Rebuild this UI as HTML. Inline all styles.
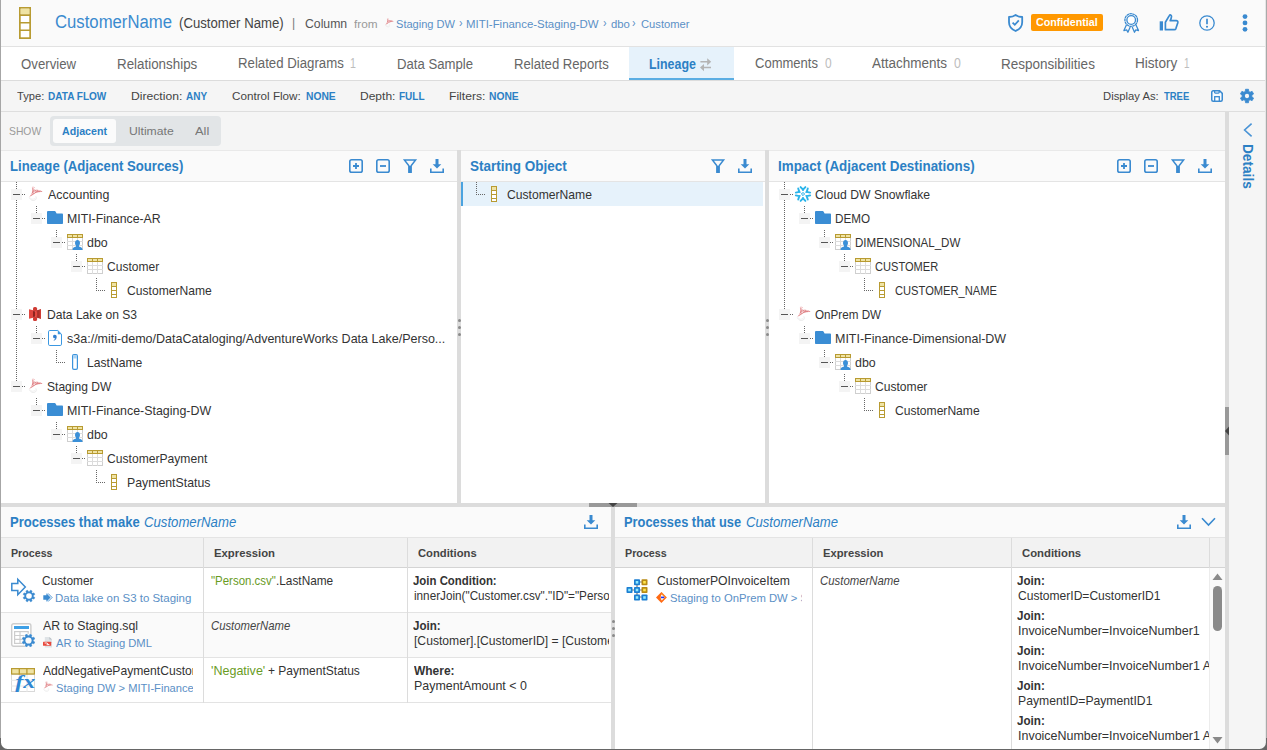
<!DOCTYPE html>
<html lang="en"><head><meta charset="utf-8"><title>CustomerName - Lineage</title>
<style>
html,body{margin:0;padding:0;background:#fff}
body{width:1267px;height:750px;overflow:hidden;position:relative;font-family:"Liberation Sans",sans-serif}
#app{position:absolute;left:0;top:0;width:1267px;height:750px;overflow:hidden;background:#fff}
.b{position:absolute;box-sizing:border-box}
.t{position:absolute;white-space:pre;line-height:1;transform-origin:0 0;display:block}
.clip{position:absolute;overflow:hidden}
svg{position:absolute;overflow:visible}
.vd{width:1px;background-image:linear-gradient(#666 50%,rgba(0,0,0,0) 50%);background-size:1px 2px}
.hd{height:1px;background-image:linear-gradient(90deg,#666 50%,rgba(0,0,0,0) 50%);background-size:2px 1px}
.exp{width:11px;height:11px;background:#f4f4f4}
.exp i{position:absolute;left:2px;top:5px;width:7px;height:1px;background:#555}
.grip{position:absolute;width:3px;height:3px;border-radius:50%;background:#8a8a8a}
</style></head><body><div id="app">

<header>
<div class="b" style="left:0px;top:0px;width:1267px;height:46px;background:#fafafa;"></div>
<div class="b" style="left:0px;top:46px;width:1267px;height:1px;background:#e2e2e2;"></div>
<svg style="left:19px;top:7px" width="12" height="32" viewBox="0 0 12 32"><rect x="0.85" y="0.85" width="10.3" height="30.3" fill="#fff" stroke="#b89b32" stroke-width="1.7"/><rect x="1.7" y="1.7" width="8.6" height="5.6" fill="#efe3a4"/><path d="M0 8.1H12M0 15.7H12M0 23.3H12" stroke="#b89b32" stroke-width="1.6"/></svg>
<span class="t" style='left:55.31px;top:14px;font-size:17.6px;color:#3a8bcf;transform:scaleX(0.9496)'>CustomerName</span>
<span class="t" style='left:179.21px;top:16px;font-size:14.0px;color:#444;transform:scaleX(0.9408)'>(Customer Name)</span>
<span class="t" style='left:292.25px;top:17px;font-size:12.7px;color:#777;transform:scaleX(0.9557)'>|</span>
<span class="t" style='left:304.71px;top:18px;font-size:12.7px;color:#555;transform:scaleX(0.9644)'>Column</span>
<span class="t" style='left:353.92px;top:18px;font-size:11.7px;color:#999;transform:scaleX(1.0099)'>from</span>
<svg style="left:384px;top:18.3px" width="9.92" height="9.92" viewBox="0 0 16 16"><g fill="none" stroke-linecap="round"><path d="M2.2 10.800C4.400 8.800 6 5.600 5.200 1.400C6.400 2.100 7.300 3 8 4.100C10.400 3.100 13.600 3.900 15.600 6C13 5.700 10.600 6.100 8.600 7.100C6.600 8.300 4.800 10 2.200 10.800z" fill="#d4545a" fill-opacity="0.720"/><path d="M5.300 1.300C6.200 .9 7.200 1.100 7.800 1.800" stroke="#e9a3a6" stroke-width="0.700"/><path d="M6.600 3.200c.9 1.100 1 2.300 .3 3.500M9.800 4.600c-1.100 .3 -2 1 -2.500 2.100M11.200 4.500c.8 -.3 1.700 -.100 2.300 .500M4.400 8.400c.8 -.300 1.500 -.800 2 -1.500" stroke="#fff" stroke-width="0.650" stroke-opacity="0.900"/><path d="M2.400 11.800C3.600 14.200 6.200 15.200 8.400 13.800C9.300 13.100 9.500 11.900 9 10.800" stroke="#e9e9e9" stroke-width="1"/><path d="M3.800 12.400C5 13.500 6.500 13.500 7.600 12.600" stroke="#efefef" stroke-width="0.800"/></g></svg>
<span class="t" style='left:396.12px;top:18px;font-size:11.7px;color:#5b90c6;transform:scaleX(0.9463)'>Staging DW</span>
<span class="t" style='left:458.78px;top:17px;font-size:12.5px;color:#5b90c6;transform:scaleX(0.8518)'>›</span>
<span class="t" style='left:466.40px;top:18px;font-size:11.7px;color:#5b90c6;transform:scaleX(0.9772)'>MITI-Finance-Staging-DW</span>
<span class="t" style='left:602.78px;top:17px;font-size:12.5px;color:#5b90c6;transform:scaleX(0.8518)'>›</span>
<span class="t" style='left:610.61px;top:18px;font-size:11.7px;color:#5b90c6;transform:scaleX(0.9672)'>dbo</span>
<span class="t" style='left:632.38px;top:17px;font-size:12.5px;color:#5b90c6;transform:scaleX(0.8518)'>›</span>
<span class="t" style='left:640.55px;top:18px;font-size:11.7px;color:#5b90c6;transform:scaleX(0.9579)'>Customer</span>
<svg style="left:1008px;top:14px" width="16" height="18" viewBox="0 0 16 18"><path d="M7.6 0.9C5.8 2.2 3.6 2.9 1 3v5.2c0 4 2.4 7 6.6 8.8c4.200 -1.8 6.600 -4.800 6.600 -8.800V3C11.600 2.900 9.400 2.200 7.600 0.900z" fill="none" stroke="#3a8ad0" stroke-width="1.800" stroke-linejoin="round"/><path d="M4.6 8.600l2.200 2.200l4 -4.400" fill="none" stroke="#3a8ad0" stroke-width="1.800"/></svg>
<div class="b" style="left:1031px;top:14px;width:72px;height:17px;background:#ff9800;border-radius:2px"></div>
<span class="t" style='left:1036.31px;top:17px;font-size:11.5px;color:#fff;transform:scaleX(0.9295);font-weight:700'>Confidential</span>
<svg style="left:1122px;top:13px" width="19" height="22" viewBox="0 0 19 22"><g fill="none" stroke="#3a8ad0" stroke-width="1.250" stroke-linejoin="round"><path d="M4.500 11.700L1.900 17.600l2.700 -.700l1.300 2.400l2.300 -5.300M13.900 11.700l2.600 5.900l-2.700 -.700l-1.300 2.400l-2.300 -5.300"/><circle cx="9.200" cy="7" r="6.300" stroke-width="1.300" stroke-dasharray="2.600 0.400"/><circle cx="9.200" cy="7" r="4.300" fill="#fff" stroke-width="1.300"/></g></svg>
<svg style="left:1159px;top:14px" width="20" height="17" viewBox="0 0 20 17"><rect x="0.700" y="7.300" width="3.300" height="9.200" fill="#3a8ad0"/><path d="M6.400 15.700V8.300L10.300 1.600c.700 -1.300 2.300 -.700 2.200 .900c-.100 1.400 -.600 2.800 -1.300 4.200h6.100c1.200 0 1.800 .900 1.500 2l-1.900 5.900c-.300 .800 -.800 1.100 -1.600 1.100z" fill="none" stroke="#3a8ad0" stroke-width="1.700" stroke-linejoin="round"/></svg>
<svg style="left:1199px;top:15px" width="16" height="16" viewBox="0 0 16 16"><circle cx="8" cy="8" r="7.200" fill="none" stroke="#3a8ad0" stroke-width="1.300"/><path d="M8 3.800V9.200" stroke="#3a8ad0" stroke-width="1.700"/><circle cx="8" cy="11.800" r="1.050" fill="#3a8ad0"/></svg>
<svg style="left:1242px;top:14px" width="6" height="18" viewBox="0 0 6 18"><circle cx="3" cy="2.6" r="2.400" fill="#3a8ad0"/><circle cx="3" cy="8.9" r="2.400" fill="#3a8ad0"/><circle cx="3" cy="15.3" r="2.400" fill="#3a8ad0"/></svg>
</header>
<nav>
<div class="b" style="left:0px;top:47px;width:1267px;height:33px;background:#fff;"></div>
<div class="b" style="left:629px;top:47px;width:105px;height:33px;background:#e6f2fb;"></div>
<div class="b" style="left:629px;top:78px;width:105px;height:2px;background:#5baee3;"></div>
<div class="b" style="left:0px;top:80px;width:1267px;height:1px;background:#dcdcdc;"></div>
<span class="t" style='left:21.29px;top:57px;font-size:14.7px;color:#666;transform:scaleX(0.8994)'>Overview</span>
<span class="t" style='left:117.08px;top:57px;font-size:14.7px;color:#666;transform:scaleX(0.9102)'>Relationships</span>
<span class="t" style='left:237.79px;top:56px;font-size:14.7px;color:#666;transform:scaleX(0.8999)'>Related Diagrams</span>
<span class="t" style='left:349.97px;top:56px;font-size:14.7px;color:#bdbdbd;transform:scaleX(0.7288)'>1</span>
<span class="t" style='left:396.99px;top:57px;font-size:14.7px;color:#666;transform:scaleX(0.8957)'>Data Sample</span>
<span class="t" style='left:513.79px;top:57px;font-size:14.7px;color:#666;transform:scaleX(0.8927)'>Related Reports</span>
<span class="t" style='left:649.16px;top:57px;font-size:14.7px;color:#2c80c4;transform:scaleX(0.8452);font-weight:700'>Lineage</span>
<svg style="left:700px;top:57.5px" width="11.5" height="13.5" viewBox="0 0 11.5 13.5"><path d="M0.400 3.800H8M3.400 9.600H11" stroke="#b4b4b4" stroke-width="1.500" fill="none"/><path d="M7.200 0.200L11.200 3.800L7.200 7.400zM4 6L0 9.600L4 13.200z" fill="#b4b4b4"/></svg>
<span class="t" style='left:755.47px;top:56px;font-size:14.7px;color:#666;transform:scaleX(0.8862)'>Comments</span>
<span class="t" style='left:824.57px;top:56px;font-size:14.7px;color:#bdbdbd;transform:scaleX(0.8141)'>0</span>
<span class="t" style='left:872.33px;top:56px;font-size:14.7px;color:#666;transform:scaleX(0.9189)'>Attachments</span>
<span class="t" style='left:953.81px;top:56px;font-size:14.7px;color:#bdbdbd;transform:scaleX(0.8366)'>0</span>
<span class="t" style='left:1000.66px;top:57px;font-size:14.7px;color:#666;transform:scaleX(0.9200)'>Responsibilities</span>
<span class="t" style='left:1135.06px;top:56px;font-size:14.7px;color:#666;transform:scaleX(0.9251)'>History</span>
<span class="t" style='left:1184.30px;top:56px;font-size:14.7px;color:#bdbdbd;transform:scaleX(0.6731)'>1</span>
</nav>
<section id="toolbar">
<div class="b" style="left:0px;top:81px;width:1267px;height:30px;background:#f5f5f5;"></div>
<div class="b" style="left:0px;top:111px;width:1267px;height:1px;background:#dedede;"></div>
<span class="t" style='left:17.21px;top:91px;font-size:11.5px;color:#444;transform:scaleX(0.9681)'>Type:</span>
<span class="t" style='left:48.29px;top:91px;font-size:11.5px;color:#2c80c4;transform:scaleX(0.8722);font-weight:700'>DATA FLOW</span>
<span class="t" style='left:130.70px;top:91px;font-size:11.5px;color:#444;transform:scaleX(1.0553)'>Direction:</span>
<span class="t" style='left:186.27px;top:91px;font-size:11.5px;color:#2c80c4;transform:scaleX(0.8680);font-weight:700'>ANY</span>
<span class="t" style='left:232.45px;top:91px;font-size:11.5px;color:#444;transform:scaleX(1.0155)'>Control Flow:</span>
<span class="t" style='left:305.67px;top:91px;font-size:11.5px;color:#2c80c4;transform:scaleX(0.8933);font-weight:700'>NONE</span>
<span class="t" style='left:360.09px;top:91px;font-size:11.5px;color:#444;transform:scaleX(1.0456)'>Depth:</span>
<span class="t" style='left:399.09px;top:91px;font-size:11.5px;color:#2c80c4;transform:scaleX(0.8688);font-weight:700'>FULL</span>
<span class="t" style='left:448.79px;top:91px;font-size:11.5px;color:#444;transform:scaleX(1.0565)'>Filters:</span>
<span class="t" style='left:489.07px;top:91px;font-size:11.5px;color:#2c80c4;transform:scaleX(0.8933);font-weight:700'>NONE</span>
<span class="t" style='left:1103.00px;top:91px;font-size:11.5px;color:#444;transform:scaleX(0.9802)'>Display As:</span>
<span class="t" style='left:1164.06px;top:91px;font-size:11.5px;color:#2c80c4;transform:scaleX(0.8224);font-weight:700'>TREE</span>
<svg style="left:1211px;top:90px" width="12" height="12" viewBox="0 0 12 12"><path d="M2.200 0.750H8.600L11.250 3.400V9.800a1.450 1.450 0 0 1 -1.450 1.450H2.200A1.450 1.450 0 0 1 .75 9.800V2.200A1.450 1.450 0 0 1 2.200 .75z" fill="#f7fbfe" stroke="#3a8ad0" stroke-width="1.500"/><path d="M3.600 1V2.300a.8 .8 0 0 0 .8 .8H7.400a.8 .8 0 0 0 .8 -.8V1" fill="none" stroke="#3a8ad0" stroke-width="1.300"/><rect x="3.700" y="6.700" width="4.600" height="4.500" fill="#fff" stroke="#3a8ad0" stroke-width="1.300"/></svg>
<svg style="left:1240px;top:89px" width="14" height="14" viewBox="0 0 14 14"><path d="M5.51 0.26L8.49 0.26L8.76 2.43L10.08 3.19L12.09 2.34L13.58 4.92L11.84 6.24L11.84 7.76L13.58 9.08L12.09 11.66L10.08 10.81L8.76 11.57L8.49 13.74L5.51 13.74L5.24 11.57L3.92 10.81L1.91 11.66L0.42 9.08L2.16 7.76L2.16 6.24L0.42 4.92L1.91 2.34L3.92 3.19L5.24 2.43z" fill="#3a8ad0" stroke="#3a8ad0" stroke-width="0.800" stroke-linejoin="round"/><circle cx="7" cy="7" r="2.150" fill="#f5f5f5"/></svg>
</section>
<main>
<div class="b" style="left:0px;top:112px;width:1267px;height:638px;background:#f5f5f5;"></div>
<span class="t" style='left:9.05px;top:126px;font-size:11.5px;color:#9a9a9a;transform:scaleX(0.8992)'>SHOW</span>
<div class="b" style="left:50px;top:116px;width:171px;height:30px;background:#e2e5e7;border-radius:4px"></div>
<div class="b" style="left:53px;top:119px;width:63px;height:24px;background:#fbfbfb;border-radius:3px"></div>
<span class="t" style='left:62.15px;top:126px;font-size:11.5px;color:#2c80c4;transform:scaleX(0.9250);font-weight:700'>Adjacent</span>
<span class="t" style='left:128.56px;top:126px;font-size:11.5px;color:#777;transform:scaleX(1.0591)'>Ultimate</span>
<span class="t" style='left:195.32px;top:126px;font-size:11.5px;color:#777;transform:scaleX(1.1194)'>All</span>
<div class="b" style="left:1225px;top:112px;width:4px;height:638px;background:#dcdcdc;"></div>
<div class="b" style="left:1225px;top:407px;width:4px;height:48px;background:#999;"></div>
<svg style="left:1225px;top:426px" width="4" height="10" viewBox="0 0 4 10"><path d="M4 0.5V9.5L0 5z" fill="#444"/></svg>
<svg style="left:1243px;top:123px" width="10" height="14" viewBox="0 0 10 14"><path d="M8.6 0.6L1.6 7l7 6.4" fill="none" stroke="#4a94d6" stroke-width="1.6"/></svg>
<span class="t" style="left:1254.8px;top:144px;font-size:14px;font-weight:700;color:#2c80c4;transform:rotate(90deg) scaleX(0.975)">Details</span>
<section id="lineage">
<div class="b" style="left:1px;top:150px;width:456px;height:353px;background:#fff;"></div>
<div class="b" style="left:1px;top:150px;width:456px;height:31px;background:#fafafa;"></div>
<div class="b" style="left:1px;top:150px;width:456px;height:1px;background:#e9e9e9;"></div>
<div class="b" style="left:1px;top:181px;width:456px;height:1px;background:#e4e4e4;"></div>
<span class="t" style='left:10.01px;top:158px;font-size:15.0px;color:#2c80c4;transform:scale(0.8773,1.001);transform-origin:0 13px;font-weight:700'>Lineage (Adjacent Sources)</span>
<svg style="left:430px;top:159px" width="14" height="14" viewBox="0 0 14 14"><path d="M5.500 0H8.500V5.200H11.300L7 9.600L2.700 5.200H5.500z" fill="#3a8ad0"/><path d="M0.800 9.500V13.200H13.200V9.500" fill="none" stroke="#3a8ad0" stroke-width="1.600"/></svg>
<svg style="left:403px;top:159px" width="14" height="14" viewBox="0 0 14 14"><path d="M1.400 0.900H12.600L8.100 6.800V13.200H5.900V6.800z" fill="#fafafa" stroke="#3a8ad0" stroke-width="1.500" stroke-linejoin="miter"/><rect x="5.600" y="7" width="2.800" height="6.700" fill="#3a8ad0"/></svg>
<svg style="left:376px;top:159px" width="14" height="14" viewBox="0 0 14 14"><rect x="0.800" y="0.800" width="12.400" height="12.400" rx="1.800" fill="none" stroke="#3a8ad0" stroke-width="1.600"/><path d="M4 7H10" stroke="#3a8ad0" stroke-width="1.800"/></svg>
<svg style="left:349px;top:159px" width="14" height="14" viewBox="0 0 14 14"><rect x="0.800" y="0.800" width="12.400" height="12.400" rx="1.800" fill="none" stroke="#3a8ad0" stroke-width="1.600"/><path d="M4 7H10M7 4V10" stroke="#3a8ad0" stroke-width="1.800"/></svg>
<div class="b vd" style="left:16px;top:182px;height:199px"></div>
<div class="b exp" style="left:11px;top:189px"><i></i></div>
<div class="b hd" style="left:22px;top:194px;width:3px"></div>
<svg style="left:27px;top:186px" width="16.0" height="16.0" viewBox="0 0 16 16"><g fill="none" stroke-linecap="round"><path d="M2.2 10.800C4.400 8.800 6 5.600 5.200 1.400C6.400 2.100 7.300 3 8 4.100C10.400 3.100 13.600 3.900 15.600 6C13 5.700 10.600 6.100 8.600 7.100C6.600 8.300 4.800 10 2.200 10.800z" fill="#d4545a" fill-opacity="0.720"/><path d="M5.300 1.300C6.200 .9 7.200 1.100 7.800 1.800" stroke="#e9a3a6" stroke-width="0.700"/><path d="M6.600 3.200c.9 1.100 1 2.300 .3 3.500M9.800 4.600c-1.100 .3 -2 1 -2.500 2.100M11.200 4.500c.8 -.3 1.700 -.100 2.300 .500M4.400 8.400c.8 -.300 1.500 -.800 2 -1.500" stroke="#fff" stroke-width="0.650" stroke-opacity="0.900"/><path d="M2.400 11.800C3.600 14.200 6.200 15.200 8.400 13.800C9.300 13.100 9.500 11.900 9 10.800" stroke="#e9e9e9" stroke-width="1"/><path d="M3.800 12.400C5 13.500 6.500 13.500 7.600 12.600" stroke="#efefef" stroke-width="0.800"/></g></svg>
<span class="t" style='left:47.51px;top:189px;font-size:12.7px;color:#333;transform:scaleX(0.9773)'>Accounting</span>
<div class="b vd" style="left:36px;top:206px;height:7px"></div>
<div class="b exp" style="left:31px;top:213px"><i></i></div>
<div class="b hd" style="left:42px;top:218px;width:3px"></div>
<svg style="left:47px;top:210px" width="16" height="16" viewBox="0 0 16 16"><path d="M1 1H7.600C8.200 1 8.500 1.300 8.800 1.900L9.600 3.600H15.200A.8 .8 0 0 1 16 4.400V13.200A.8 .8 0 0 1 15.200 14H.8A.8 .8 0 0 1 0 13.200V2A1 1 0 0 1 1 1z" fill="#3a8dd4"/></svg>
<span class="t" style='left:66.70px;top:213px;font-size:12.7px;color:#333;transform:scaleX(0.9700)'>MITI-Finance-AR</span>
<div class="b vd" style="left:56px;top:230px;height:7px"></div>
<div class="b exp" style="left:51px;top:237px"><i></i></div>
<div class="b hd" style="left:62px;top:242px;width:3px"></div>
<svg style="left:67px;top:234px" width="16" height="16" viewBox="0 0 16 16"><rect x="0.500" y="3.500" width="15" height="12" fill="#fff" stroke="#cfcfcf"/><path d="M5.500 4V16M10.500 4V16M0 7.500H16M0 11.500H16" stroke="#dcdcdc" stroke-width="1" fill="none"/><rect x="0.500" y="0.500" width="15" height="3" fill="#efe3a4" stroke="#b89b32"/><path d="M5.500 0V4M10.500 0V4" stroke="#b89b32" stroke-width="1"/><path d="M5.400 16C5.400 13.600 7.300 13.100 9 12.500V11.600C8.300 10.900 8 9.900 8 8.900C8 7.100 9.100 6 10.500 6C11.900 6 13 7.100 13 8.900C13 9.900 12.700 10.900 12 11.600V12.500C13.700 13.100 15.600 13.600 15.600 16z" fill="#3b90d8"/></svg>
<span class="t" style='left:87.21px;top:237px;font-size:12.7px;color:#333;transform:scaleX(0.9770)'>dbo</span>
<div class="b vd" style="left:76px;top:254px;height:7px"></div>
<div class="b exp" style="left:71px;top:261px"><i></i></div>
<div class="b hd" style="left:82px;top:266px;width:3px"></div>
<svg style="left:87px;top:258px" width="16" height="16" viewBox="0 0 16 16"><rect x="0.500" y="3.500" width="15" height="12" fill="#fff" stroke="#cfcfcf"/><path d="M5.500 4V16M10.500 4V16M0 7.500H16M0 11.500H16" stroke="#dcdcdc" stroke-width="1" fill="none"/><rect x="0.500" y="0.500" width="15" height="3" fill="#efe3a4" stroke="#b89b32"/><path d="M5.500 0V4M10.500 0V4" stroke="#b89b32" stroke-width="1"/></svg>
<span class="t" style='left:107.12px;top:261px;font-size:12.7px;color:#333;transform:scaleX(0.9486)'>Customer</span>
<div class="b vd" style="left:96px;top:278px;height:13px"></div>
<div class="b hd" style="left:96px;top:290px;width:9px"></div>
<svg style="left:111px;top:282px" width="6" height="16" viewBox="0 0 6 16"><rect x="0.500" y="0.500" width="5" height="15" fill="#fff" stroke="#b89b32"/><rect x="1" y="1" width="4" height="3" fill="#efe3a4"/><path d="M0 4.500H6M0 8.500H6M0 12.500H6" stroke="#b89b32" stroke-width="1"/></svg>
<span class="t" style='left:127.11px;top:285px;font-size:12.7px;color:#333;transform:scaleX(0.9545)'>CustomerName</span>
<div class="b exp" style="left:11px;top:309px"><i></i></div>
<div class="b hd" style="left:22px;top:314px;width:3px"></div>
<svg style="left:29px;top:307px" width="12" height="14" viewBox="0 0 12 14"><path d="M0 2.200L5.200 3.500V10.500L0 11.800z" fill="#df463f"/><path d="M12 2.200L6.800 3.500V10.500L12 11.800z" fill="#a9322b"/><path d="M12 2.200L10.600 2.550V11.450L12 11.800z" fill="#cf3d36"/><rect x="4" y="0" width="4.100" height="4.400" rx="1.600" fill="#cf3a33"/><rect x="4" y="9.600" width="4.100" height="4.400" rx="1.600" fill="#cf3a33"/><rect x="4" y="4.200" width="2.100" height="5.600" fill="#8e241f"/><rect x="6" y="4.200" width="2.100" height="5.600" fill="#e4483f"/></svg>
<span class="t" style='left:46.70px;top:309px;font-size:12.7px;color:#333;transform:scaleX(0.9530)'>Data Lake on S3</span>
<div class="b vd" style="left:36px;top:326px;height:7px"></div>
<div class="b exp" style="left:31px;top:333px"><i></i></div>
<div class="b hd" style="left:42px;top:338px;width:3px"></div>
<svg style="left:48px;top:330px" width="14" height="16" viewBox="0 0 14 16"><path d="M1.800 .5H9.800L13.500 4.200V14.200A1.300 1.300 0 0 1 12.200 15.500H1.800A1.300 1.300 0 0 1 .5 14.200V1.800A1.300 1.300 0 0 1 1.800 .5z" fill="#fff" stroke="#3b98e2" stroke-width="1"/><path d="M9.800 .5V4.200H13.500z" fill="#3b98e2"/><path d="M6.900 4.800A1.700 1.700 0 1 0 7.300 8.100C7.100 9 6.500 9.700 5.600 10.200L6 10.800C7.800 10 8.700 8.600 8.700 6.800C8.700 5.600 8 4.800 6.900 4.800z" fill="#2f7fd0"/></svg>
<span class="t" style='left:67.18px;top:333px;font-size:12.7px;color:#333;transform:scaleX(0.9867)'>s3a://miti-demo/DataCataloging/AdventureWorks Data Lake/Perso...</span>
<div class="b vd" style="left:56px;top:350px;height:13px"></div>
<div class="b hd" style="left:56px;top:362px;width:9px"></div>
<svg style="left:72px;top:354px" width="6" height="16" viewBox="0 0 6 16"><rect x="0.600" y="0.600" width="4.800" height="14.800" rx="1.300" fill="#fff" stroke="#3b93dc" stroke-width="1.200"/><rect x="1.200" y="1.200" width="3.600" height="3.300" fill="#a9d2f3"/></svg>
<span class="t" style='left:86.70px;top:357px;font-size:12.7px;color:#333;transform:scaleX(0.9561)'>LastName</span>
<div class="b exp" style="left:11px;top:381px"><i></i></div>
<div class="b hd" style="left:22px;top:386px;width:3px"></div>
<svg style="left:27px;top:378px" width="16.0" height="16.0" viewBox="0 0 16 16"><g fill="none" stroke-linecap="round"><path d="M2.2 10.800C4.400 8.800 6 5.600 5.200 1.400C6.400 2.100 7.300 3 8 4.100C10.400 3.100 13.600 3.900 15.600 6C13 5.700 10.600 6.100 8.600 7.100C6.600 8.300 4.800 10 2.200 10.800z" fill="#d4545a" fill-opacity="0.720"/><path d="M5.300 1.300C6.200 .9 7.200 1.100 7.800 1.800" stroke="#e9a3a6" stroke-width="0.700"/><path d="M6.600 3.200c.9 1.100 1 2.300 .3 3.500M9.800 4.600c-1.100 .3 -2 1 -2.500 2.100M11.200 4.500c.8 -.3 1.700 -.100 2.300 .500M4.400 8.400c.8 -.300 1.500 -.800 2 -1.500" stroke="#fff" stroke-width="0.650" stroke-opacity="0.900"/><path d="M2.400 11.800C3.600 14.200 6.200 15.200 8.400 13.800C9.300 13.100 9.500 11.900 9 10.800" stroke="#e9e9e9" stroke-width="1"/><path d="M3.800 12.400C5 13.500 6.500 13.500 7.600 12.600" stroke="#efefef" stroke-width="0.800"/></g></svg>
<span class="t" style='left:46.94px;top:381px;font-size:12.7px;color:#333;transform:scaleX(0.9496)'>Staging DW</span>
<div class="b vd" style="left:36px;top:398px;height:7px"></div>
<div class="b exp" style="left:31px;top:405px"><i></i></div>
<div class="b hd" style="left:42px;top:410px;width:3px"></div>
<svg style="left:47px;top:402px" width="16" height="16" viewBox="0 0 16 16"><path d="M1 1H7.600C8.200 1 8.500 1.300 8.800 1.900L9.600 3.600H15.200A.8 .8 0 0 1 16 4.400V13.200A.8 .8 0 0 1 15.200 14H.8A.8 .8 0 0 1 0 13.200V2A1 1 0 0 1 1 1z" fill="#3a8dd4"/></svg>
<span class="t" style='left:66.70px;top:405px;font-size:12.7px;color:#333;transform:scaleX(0.9783)'>MITI-Finance-Staging-DW</span>
<div class="b vd" style="left:56px;top:422px;height:7px"></div>
<div class="b exp" style="left:51px;top:429px"><i></i></div>
<div class="b hd" style="left:62px;top:434px;width:3px"></div>
<svg style="left:67px;top:426px" width="16" height="16" viewBox="0 0 16 16"><rect x="0.500" y="3.500" width="15" height="12" fill="#fff" stroke="#cfcfcf"/><path d="M5.500 4V16M10.500 4V16M0 7.500H16M0 11.500H16" stroke="#dcdcdc" stroke-width="1" fill="none"/><rect x="0.500" y="0.500" width="15" height="3" fill="#efe3a4" stroke="#b89b32"/><path d="M5.500 0V4M10.500 0V4" stroke="#b89b32" stroke-width="1"/><path d="M5.400 16C5.400 13.600 7.300 13.100 9 12.500V11.600C8.300 10.900 8 9.900 8 8.900C8 7.100 9.100 6 10.500 6C11.900 6 13 7.100 13 8.900C13 9.900 12.700 10.900 12 11.600V12.500C13.700 13.100 15.600 13.600 15.600 16z" fill="#3b90d8"/></svg>
<span class="t" style='left:87.21px;top:429px;font-size:12.7px;color:#333;transform:scaleX(0.9770)'>dbo</span>
<div class="b vd" style="left:76px;top:446px;height:7px"></div>
<div class="b exp" style="left:71px;top:453px"><i></i></div>
<div class="b hd" style="left:82px;top:458px;width:3px"></div>
<svg style="left:87px;top:450px" width="16" height="16" viewBox="0 0 16 16"><rect x="0.500" y="3.500" width="15" height="12" fill="#fff" stroke="#cfcfcf"/><path d="M5.500 4V16M10.500 4V16M0 7.500H16M0 11.500H16" stroke="#dcdcdc" stroke-width="1" fill="none"/><rect x="0.500" y="0.500" width="15" height="3" fill="#efe3a4" stroke="#b89b32"/><path d="M5.500 0V4M10.500 0V4" stroke="#b89b32" stroke-width="1"/></svg>
<span class="t" style='left:107.11px;top:453px;font-size:12.7px;color:#333;transform:scaleX(0.9545)'>CustomerPayment</span>
<div class="b vd" style="left:96px;top:470px;height:13px"></div>
<div class="b hd" style="left:96px;top:482px;width:9px"></div>
<svg style="left:111px;top:474px" width="6" height="16" viewBox="0 0 6 16"><rect x="0.500" y="0.500" width="5" height="15" fill="#fff" stroke="#b89b32"/><rect x="1" y="1" width="4" height="3" fill="#efe3a4"/><path d="M0 4.500H6M0 8.500H6M0 12.500H6" stroke="#b89b32" stroke-width="1"/></svg>
<span class="t" style='left:126.70px;top:477px;font-size:12.7px;color:#333;transform:scaleX(0.9694)'>PaymentStatus</span>
</section>
<div class="b" style="left:457px;top:150px;width:4px;height:353px;background:#dcdcdc;"></div>
<i class="grip" style="left:458px;top:319px"></i>
<i class="grip" style="left:458px;top:326px"></i>
<i class="grip" style="left:458px;top:333px"></i>
<section id="start">
<div class="b" style="left:461px;top:150px;width:304px;height:353px;background:#fff;"></div>
<div class="b" style="left:461px;top:150px;width:304px;height:31px;background:#fafafa;"></div>
<div class="b" style="left:461px;top:150px;width:304px;height:1px;background:#e9e9e9;"></div>
<div class="b" style="left:461px;top:181px;width:304px;height:1px;background:#e4e4e4;"></div>
<span class="t" style='left:470.11px;top:158px;font-size:15.0px;color:#2c80c4;transform:scale(0.9010,1.001);transform-origin:0 13px;font-weight:700'>Starting Object</span>
<svg style="left:738px;top:159px" width="14" height="14" viewBox="0 0 14 14"><path d="M5.500 0H8.500V5.200H11.300L7 9.600L2.700 5.200H5.500z" fill="#3a8ad0"/><path d="M0.800 9.500V13.200H13.200V9.500" fill="none" stroke="#3a8ad0" stroke-width="1.600"/></svg>
<svg style="left:711px;top:159px" width="14" height="14" viewBox="0 0 14 14"><path d="M1.400 0.900H12.600L8.100 6.800V13.200H5.900V6.800z" fill="#fafafa" stroke="#3a8ad0" stroke-width="1.500" stroke-linejoin="miter"/><rect x="5.600" y="7" width="2.800" height="6.700" fill="#3a8ad0"/></svg>
<div class="b" style="left:461px;top:182px;width:302px;height:24px;background:#e6f2fb;"></div>
<div class="b" style="left:461px;top:182px;width:2px;height:24px;background:#4aa3e0;"></div>
<div class="b vd" style="left:476px;top:182px;height:13px"></div>
<div class="b hd" style="left:476px;top:194px;width:9px"></div>
<svg style="left:491px;top:186px" width="6" height="16" viewBox="0 0 6 16"><rect x="0.500" y="0.500" width="5" height="15" fill="#fff" stroke="#b89b32"/><rect x="1" y="1" width="4" height="3" fill="#efe3a4"/><path d="M0 4.500H6M0 8.500H6M0 12.500H6" stroke="#b89b32" stroke-width="1"/></svg>
<span class="t" style='left:507.11px;top:189px;font-size:12.7px;color:#333;transform:scaleX(0.9566)'>CustomerName</span>
</section>
<div class="b" style="left:765px;top:150px;width:4px;height:353px;background:#dcdcdc;"></div>
<i class="grip" style="left:766px;top:319px"></i>
<i class="grip" style="left:766px;top:326px"></i>
<i class="grip" style="left:766px;top:333px"></i>
<section id="impact">
<div class="b" style="left:769px;top:150px;width:456px;height:353px;background:#fff;"></div>
<div class="b" style="left:769px;top:150px;width:456px;height:31px;background:#fafafa;"></div>
<div class="b" style="left:769px;top:150px;width:456px;height:1px;background:#e9e9e9;"></div>
<div class="b" style="left:769px;top:181px;width:456px;height:1px;background:#e4e4e4;"></div>
<span class="t" style='left:778.21px;top:158px;font-size:15.0px;color:#2c80c4;transform:scale(0.8935,1.001);transform-origin:0 13px;font-weight:700'>Impact (Adjacent Destinations)</span>
<svg style="left:1198px;top:159px" width="14" height="14" viewBox="0 0 14 14"><path d="M5.500 0H8.500V5.200H11.300L7 9.600L2.700 5.200H5.500z" fill="#3a8ad0"/><path d="M0.800 9.500V13.200H13.200V9.500" fill="none" stroke="#3a8ad0" stroke-width="1.600"/></svg>
<svg style="left:1171px;top:159px" width="14" height="14" viewBox="0 0 14 14"><path d="M1.400 0.900H12.600L8.100 6.800V13.200H5.900V6.800z" fill="#fafafa" stroke="#3a8ad0" stroke-width="1.500" stroke-linejoin="miter"/><rect x="5.600" y="7" width="2.800" height="6.700" fill="#3a8ad0"/></svg>
<svg style="left:1144px;top:159px" width="14" height="14" viewBox="0 0 14 14"><rect x="0.800" y="0.800" width="12.400" height="12.400" rx="1.800" fill="none" stroke="#3a8ad0" stroke-width="1.600"/><path d="M4 7H10" stroke="#3a8ad0" stroke-width="1.800"/></svg>
<svg style="left:1117px;top:159px" width="14" height="14" viewBox="0 0 14 14"><rect x="0.800" y="0.800" width="12.400" height="12.400" rx="1.800" fill="none" stroke="#3a8ad0" stroke-width="1.600"/><path d="M4 7H10M7 4V10" stroke="#3a8ad0" stroke-width="1.800"/></svg>
<div class="b vd" style="left:784px;top:182px;height:127px"></div>
<div class="b exp" style="left:779px;top:189px"><i></i></div>
<div class="b hd" style="left:790px;top:194px;width:3px"></div>
<svg style="left:795px;top:186px" width="16" height="16" viewBox="0 0 16 16"><g transform="rotate(0 8 8)"><path d="M5.600 1.100L8 3.700L10.400 1.100" fill="none" stroke="#2ab4ea" stroke-width="1.900" stroke-linecap="round" stroke-linejoin="miter"/><path d="M8 3.700V5" stroke="#2ab4ea" stroke-width="1.300"/></g><g transform="rotate(60 8 8)"><path d="M5.600 1.100L8 3.700L10.400 1.100" fill="none" stroke="#2ab4ea" stroke-width="1.900" stroke-linecap="round" stroke-linejoin="miter"/><path d="M8 3.700V5" stroke="#2ab4ea" stroke-width="1.300"/></g><g transform="rotate(120 8 8)"><path d="M5.600 1.100L8 3.700L10.400 1.100" fill="none" stroke="#2ab4ea" stroke-width="1.900" stroke-linecap="round" stroke-linejoin="miter"/><path d="M8 3.700V5" stroke="#2ab4ea" stroke-width="1.300"/></g><g transform="rotate(180 8 8)"><path d="M5.600 1.100L8 3.700L10.400 1.100" fill="none" stroke="#2ab4ea" stroke-width="1.900" stroke-linecap="round" stroke-linejoin="miter"/><path d="M8 3.700V5" stroke="#2ab4ea" stroke-width="1.300"/></g><g transform="rotate(240 8 8)"><path d="M5.600 1.100L8 3.700L10.400 1.100" fill="none" stroke="#2ab4ea" stroke-width="1.900" stroke-linecap="round" stroke-linejoin="miter"/><path d="M8 3.700V5" stroke="#2ab4ea" stroke-width="1.300"/></g><g transform="rotate(300 8 8)"><path d="M5.600 1.100L8 3.700L10.400 1.100" fill="none" stroke="#2ab4ea" stroke-width="1.900" stroke-linecap="round" stroke-linejoin="miter"/><path d="M8 3.700V5" stroke="#2ab4ea" stroke-width="1.300"/></g><path d="M8 6.300L9.700 8L8 9.700L6.300 8z" fill="#bfe6f8" stroke="#2ab4ea" stroke-width="0.900"/></svg>
<span class="t" style='left:815.11px;top:189px;font-size:12.7px;color:#333;transform:scaleX(0.9604)'>Cloud DW Snowflake</span>
<div class="b vd" style="left:804px;top:206px;height:7px"></div>
<div class="b exp" style="left:799px;top:213px"><i></i></div>
<div class="b hd" style="left:810px;top:218px;width:3px"></div>
<svg style="left:815px;top:210px" width="16" height="16" viewBox="0 0 16 16"><path d="M1 1H7.600C8.200 1 8.500 1.300 8.800 1.900L9.600 3.600H15.200A.8 .8 0 0 1 16 4.400V13.200A.8 .8 0 0 1 15.200 14H.8A.8 .8 0 0 1 0 13.200V2A1 1 0 0 1 1 1z" fill="#3a8dd4"/></svg>
<span class="t" style='left:834.69px;top:213px;font-size:12.7px;color:#333;transform:scaleX(0.9212)'>DEMO</span>
<div class="b vd" style="left:824px;top:230px;height:7px"></div>
<div class="b exp" style="left:819px;top:237px"><i></i></div>
<div class="b hd" style="left:830px;top:242px;width:3px"></div>
<svg style="left:835px;top:234px" width="16" height="16" viewBox="0 0 16 16"><rect x="0.500" y="3.500" width="15" height="12" fill="#fff" stroke="#cfcfcf"/><path d="M5.500 4V16M10.500 4V16M0 7.500H16M0 11.500H16" stroke="#dcdcdc" stroke-width="1" fill="none"/><rect x="0.500" y="0.500" width="15" height="3" fill="#efe3a4" stroke="#b89b32"/><path d="M5.500 0V4M10.500 0V4" stroke="#b89b32" stroke-width="1"/><path d="M5.400 16C5.400 13.600 7.300 13.100 9 12.500V11.600C8.300 10.900 8 9.900 8 8.900C8 7.100 9.100 6 10.500 6C11.900 6 13 7.100 13 8.900C13 9.900 12.700 10.900 12 11.600V12.500C13.700 13.100 15.600 13.600 15.600 16z" fill="#3b90d8"/></svg>
<span class="t" style='left:854.70px;top:237px;font-size:12.7px;color:#333;transform:scaleX(0.9114)'>DIMENSIONAL_DW</span>
<div class="b vd" style="left:844px;top:254px;height:7px"></div>
<div class="b exp" style="left:839px;top:261px"><i></i></div>
<div class="b hd" style="left:850px;top:266px;width:3px"></div>
<svg style="left:855px;top:258px" width="16" height="16" viewBox="0 0 16 16"><rect x="0.500" y="3.500" width="15" height="12" fill="#fff" stroke="#cfcfcf"/><path d="M5.500 4V16M10.500 4V16M0 7.500H16M0 11.500H16" stroke="#dcdcdc" stroke-width="1" fill="none"/><rect x="0.500" y="0.500" width="15" height="3" fill="#efe3a4" stroke="#b89b32"/><path d="M5.500 0V4M10.500 0V4" stroke="#b89b32" stroke-width="1"/></svg>
<span class="t" style='left:875.17px;top:261px;font-size:12.7px;color:#333;transform:scaleX(0.8734)'>CUSTOMER</span>
<div class="b vd" style="left:864px;top:278px;height:13px"></div>
<div class="b hd" style="left:864px;top:290px;width:9px"></div>
<svg style="left:879px;top:282px" width="6" height="16" viewBox="0 0 6 16"><rect x="0.500" y="0.500" width="5" height="15" fill="#fff" stroke="#b89b32"/><rect x="1" y="1" width="4" height="3" fill="#efe3a4"/><path d="M0 4.500H6M0 8.500H6M0 12.500H6" stroke="#b89b32" stroke-width="1"/></svg>
<span class="t" style='left:895.17px;top:285px;font-size:12.7px;color:#333;transform:scaleX(0.8790)'>CUSTOMER_NAME</span>
<div class="b exp" style="left:779px;top:309px"><i></i></div>
<div class="b hd" style="left:790px;top:314px;width:3px"></div>
<svg style="left:795px;top:306px" width="16.0" height="16.0" viewBox="0 0 16 16"><g fill="none" stroke-linecap="round"><path d="M2.2 10.800C4.400 8.800 6 5.600 5.200 1.400C6.400 2.100 7.300 3 8 4.100C10.400 3.100 13.600 3.900 15.600 6C13 5.700 10.600 6.100 8.600 7.100C6.600 8.300 4.800 10 2.200 10.800z" fill="#d4545a" fill-opacity="0.720"/><path d="M5.300 1.300C6.200 .9 7.200 1.100 7.800 1.800" stroke="#e9a3a6" stroke-width="0.700"/><path d="M6.600 3.200c.9 1.100 1 2.300 .3 3.500M9.800 4.600c-1.100 .3 -2 1 -2.500 2.100M11.200 4.500c.8 -.3 1.700 -.100 2.300 .500M4.400 8.400c.8 -.300 1.500 -.800 2 -1.500" stroke="#fff" stroke-width="0.650" stroke-opacity="0.900"/><path d="M2.400 11.800C3.600 14.200 6.200 15.200 8.400 13.800C9.300 13.100 9.500 11.900 9 10.800" stroke="#e9e9e9" stroke-width="1"/><path d="M3.800 12.400C5 13.500 6.500 13.500 7.600 12.600" stroke="#efefef" stroke-width="0.800"/></g></svg>
<span class="t" style='left:815.19px;top:309px;font-size:12.7px;color:#333;transform:scaleX(0.9191)'>OnPrem DW</span>
<div class="b vd" style="left:804px;top:326px;height:7px"></div>
<div class="b exp" style="left:799px;top:333px"><i></i></div>
<div class="b hd" style="left:810px;top:338px;width:3px"></div>
<svg style="left:815px;top:330px" width="16" height="16" viewBox="0 0 16 16"><path d="M1 1H7.600C8.200 1 8.500 1.300 8.800 1.900L9.600 3.600H15.200A.8 .8 0 0 1 16 4.400V13.200A.8 .8 0 0 1 15.200 14H.8A.8 .8 0 0 1 0 13.200V2A1 1 0 0 1 1 1z" fill="#3a8dd4"/></svg>
<span class="t" style='left:834.70px;top:333px;font-size:12.7px;color:#333;transform:scaleX(0.9825)'>MITI-Finance-Dimensional-DW</span>
<div class="b vd" style="left:824px;top:350px;height:7px"></div>
<div class="b exp" style="left:819px;top:357px"><i></i></div>
<div class="b hd" style="left:830px;top:362px;width:3px"></div>
<svg style="left:835px;top:354px" width="16" height="16" viewBox="0 0 16 16"><rect x="0.500" y="3.500" width="15" height="12" fill="#fff" stroke="#cfcfcf"/><path d="M5.500 4V16M10.500 4V16M0 7.500H16M0 11.500H16" stroke="#dcdcdc" stroke-width="1" fill="none"/><rect x="0.500" y="0.500" width="15" height="3" fill="#efe3a4" stroke="#b89b32"/><path d="M5.500 0V4M10.500 0V4" stroke="#b89b32" stroke-width="1"/><path d="M5.400 16C5.400 13.600 7.300 13.100 9 12.500V11.600C8.300 10.900 8 9.900 8 8.900C8 7.100 9.100 6 10.500 6C11.900 6 13 7.100 13 8.900C13 9.900 12.700 10.900 12 11.600V12.500C13.700 13.100 15.600 13.600 15.600 16z" fill="#3b90d8"/></svg>
<span class="t" style='left:855.21px;top:357px;font-size:12.7px;color:#333;transform:scaleX(0.9770)'>dbo</span>
<div class="b vd" style="left:844px;top:374px;height:7px"></div>
<div class="b exp" style="left:839px;top:381px"><i></i></div>
<div class="b hd" style="left:850px;top:386px;width:3px"></div>
<svg style="left:855px;top:378px" width="16" height="16" viewBox="0 0 16 16"><rect x="0.500" y="3.500" width="15" height="12" fill="#fff" stroke="#cfcfcf"/><path d="M5.500 4V16M10.500 4V16M0 7.500H16M0 11.500H16" stroke="#dcdcdc" stroke-width="1" fill="none"/><rect x="0.500" y="0.500" width="15" height="3" fill="#efe3a4" stroke="#b89b32"/><path d="M5.500 0V4M10.500 0V4" stroke="#b89b32" stroke-width="1"/></svg>
<span class="t" style='left:875.11px;top:381px;font-size:12.7px;color:#333;transform:scaleX(0.9523)'>Customer</span>
<div class="b vd" style="left:864px;top:398px;height:13px"></div>
<div class="b hd" style="left:864px;top:410px;width:9px"></div>
<svg style="left:879px;top:402px" width="6" height="16" viewBox="0 0 6 16"><rect x="0.500" y="0.500" width="5" height="15" fill="#fff" stroke="#b89b32"/><rect x="1" y="1" width="4" height="3" fill="#efe3a4"/><path d="M0 4.500H6M0 8.500H6M0 12.500H6" stroke="#b89b32" stroke-width="1"/></svg>
<span class="t" style='left:895.11px;top:405px;font-size:12.7px;color:#333;transform:scaleX(0.9527)'>CustomerName</span>
</section>
<div class="b" style="left:1px;top:503px;width:1224px;height:4px;background:#dcdcdc;"></div>
<div class="b" style="left:589px;top:503px;width:48px;height:4px;background:#999;"></div>
<svg style="left:608px;top:503px" width="10" height="4" viewBox="0 0 10 4"><path d="M0.5 0H9.5L5 4z" fill="#444"/></svg>
<section id="make">
<div class="b" style="left:1px;top:507px;width:610px;height:243px;background:#fff;"></div>
<div class="b" style="left:1px;top:507px;width:610px;height:30px;background:#fafafa;"></div>
<div class="b" style="left:1px;top:537px;width:610px;height:1px;background:#e4e4e4;"></div>
<span class="t" style='left:10.41px;top:514px;font-size:15.0px;color:#2c80c4;transform:scale(0.8690,1.001);transform-origin:0 13px;font-weight:700'>Processes that make</span>
<span class="t" style='left:144.19px;top:514px;font-size:15.0px;color:#2c80c4;transform:scale(0.8779,1.001);transform-origin:0 13px;font-style:italic'>CustomerName</span>
<svg style="left:584px;top:515px" width="14" height="14" viewBox="0 0 14 14"><path d="M5.500 0H8.500V5.200H11.300L7 9.600L2.700 5.200H5.500z" fill="#3a8ad0"/><path d="M0.800 9.500V13.200H13.200V9.500" fill="none" stroke="#3a8ad0" stroke-width="1.600"/></svg>
<div class="b" style="left:1px;top:538px;width:610px;height:29px;background:#f2f2f2;"></div>
<div class="b" style="left:1px;top:567px;width:610px;height:1px;background:#d4d4d4;"></div>
<span class="t" style='left:11.05px;top:547px;font-size:11.7px;color:#444;transform:scaleX(0.9134);font-weight:700'>Process</span>
<span class="t" style='left:213.81px;top:547px;font-size:11.7px;color:#444;transform:scaleX(0.9675);font-weight:700'>Expression</span>
<span class="t" style='left:418.17px;top:547px;font-size:11.7px;color:#444;transform:scaleX(0.9608);font-weight:700'>Conditions</span>
<div class="b" style="left:1px;top:613px;width:610px;height:44px;background:#fafafa;"></div>
<div class="b" style="left:1px;top:612px;width:610px;height:1px;background:#e3e3e3;"></div>
<div class="b" style="left:1px;top:657px;width:610px;height:1px;background:#e3e3e3;"></div>
<div class="b" style="left:1px;top:702px;width:610px;height:1px;background:#e3e3e3;"></div>
<div class="b" style="left:203px;top:538px;width:1px;height:165px;background:#dcdcdc;"></div>
<div class="b" style="left:407px;top:538px;width:1px;height:165px;background:#dcdcdc;"></div>
<svg style="left:11px;top:578px" width="24" height="24" viewBox="0 0 24 24"><path d="M0.800 5.400H6.800V1.300L14.300 9L6.800 16.700V12.600H0.800z" fill="#fff" stroke="#3a8ad0" stroke-width="1.500" stroke-linejoin="miter"/><path d="M17.08 12.17L18.92 12.17L19.13 13.85L20.14 14.27L21.47 13.23L22.77 14.53L21.73 15.86L22.15 16.87L23.83 17.08L23.83 18.92L22.15 19.13L21.73 20.14L22.77 21.47L21.47 22.77L20.14 21.73L19.13 22.15L18.92 23.83L17.08 23.83L16.87 22.15L15.86 21.73L14.53 22.77L13.23 21.47L14.27 20.14L13.85 19.13L12.17 18.92L12.17 17.08L13.85 16.87L14.27 15.86L13.23 14.53L14.53 13.23L15.86 14.27L16.87 13.85z" fill="#3a8ad0" stroke="#3a8ad0" stroke-width="0.500" stroke-linejoin="round" transform="rotate(22.5 18 18)"/><circle cx="18" cy="18" r="2.8" fill="#fff"/></svg>
<span class="t" style='left:42.25px;top:575px;font-size:12.7px;color:#333;transform:scaleX(0.9362)'>Customer</span>
<svg style="left:42.5px;top:593px" width="10" height="9" viewBox="0 0 10 9"><path d="M0.300 2.200H3.400V0.300L7.600 4.500L3.400 8.700V6.800H0.300z" fill="#3a8ad0"/><path d="M5 0.400L9.100 4.500L5 8.600" fill="none" stroke="#3a8ad0" stroke-width="0.900"/></svg>
<span class="t" style='left:55.20px;top:593px;font-size:11.5px;color:#5b90c6;transform:scaleX(0.9962)'>Data lake on S3 to Staging</span>
<span class="t" style='left:210.86px;top:575px;font-size:12.7px;color:#6a9c1f;transform:scaleX(0.9043)'>"Person.csv"</span>
<span class="t" style='left:275.92px;top:575px;font-size:12.7px;color:#333;transform:scaleX(0.9322)'>.LastName</span>
<span class="t" style='left:413.43px;top:575px;font-size:12.7px;color:#333;transform:scaleX(0.8994);font-weight:700'>Join Condition:</span>
<div class="clip" style="left:408px;top:587px;width:201px;height:20.7px"><span class="t" style='left:5.98px;top:3px;font-size:12.7px;color:#333;transform:scaleX(0.9238)'>innerJoin("Customer.csv"."ID"="Person.csv"."ID")</span></div>
<svg style="left:11px;top:623px" width="24" height="24" viewBox="0 0 24 24"><rect x="0.700" y="0.700" width="19.200" height="22.600" rx="2" fill="#fff" stroke="#cdcdcd" stroke-width="1.400"/><rect x="3" y="3" width="15" height="3" fill="#3fa0e6"/><rect x="3.600" y="8.600" width="13.600" height="11.800" fill="#fff" stroke="#cdcdcd" stroke-width="1.200"/><path d="M9 8.600V20.400M3.600 12.500H17M3.600 16.400H17" stroke="#cdcdcd" stroke-width="1.100" fill="none"/><circle cx="17.500" cy="17.500" r="6.800" fill="#fafafa"/><path d="M16.50 11.18L18.50 11.18L18.73 12.96L19.84 13.42L21.26 12.32L22.68 13.74L21.58 15.16L22.04 16.27L23.82 16.50L23.82 18.50L22.04 18.73L21.58 19.84L22.68 21.26L21.26 22.68L19.84 21.58L18.73 22.04L18.50 23.82L16.50 23.82L16.27 22.04L15.16 21.58L13.74 22.68L12.32 21.26L13.42 19.84L12.96 18.73L11.18 18.50L11.18 16.50L12.96 16.27L13.42 15.16L12.32 13.74L13.74 12.32L15.16 13.42L16.27 12.96z" fill="#3a8ad0" stroke="#3a8ad0" stroke-width="0.500" stroke-linejoin="round" transform="rotate(22.5 17.5 17.5)"/><circle cx="17.5" cy="17.5" r="3.1" fill="#fafafa"/></svg>
<span class="t" style='left:42.62px;top:620px;font-size:12.7px;color:#333;transform:scaleX(0.9695)'>AR to Staging.sql</span>
<svg style="left:42.5px;top:637px" width="10" height="11" viewBox="0 0 10 11"><path d="M1.800 0H6.400L9 2.600V10.500H1.800z" fill="#dfe3e6"/><path d="M6.400 0V2.600H9z" fill="#b9c0c6"/><rect x="0" y="4.800" width="8.200" height="4" rx="0.500" fill="#e8483c"/><path d="M1.600 6H4.200M3.600 7.600H6.400M4.200 6L5.400 7.600" stroke="#fff" stroke-width="0.900" fill="none"/></svg>
<span class="t" style='left:56.02px;top:638px;font-size:11.5px;color:#5b90c6;transform:scaleX(0.9745)'>AR to Staging DML</span>
<span class="t" style='left:210.70px;top:620px;font-size:12.7px;color:#444;transform:scaleX(0.8912);font-style:italic'>CustomerName</span>
<span class="t" style='left:413.41px;top:620px;font-size:12.7px;color:#333;transform:scaleX(0.9108);font-weight:700'>Join:</span>
<div class="clip" style="left:408px;top:632px;width:201px;height:20.7px"><span class="t" style='left:5.91px;top:3px;font-size:12.7px;color:#333;transform:scaleX(0.9561)'>[Customer].[CustomerID] = [CustomerPayment].[CustomerID]</span></div>
<svg style="left:11px;top:668px" width="24" height="24" viewBox="0 0 24 24"><rect x="0.500" y="6.500" width="23" height="17" fill="#fff" stroke="#d9d9d9"/><path d="M8.500 6V24M16 6V24M0 12.300H24M0 18H24" stroke="#e6e6e6" stroke-width="1" fill="none"/><rect x="0.600" y="0.600" width="22.800" height="5.400" fill="#efe3a4" stroke="#b89b32" stroke-width="1.200"/><path d="M8.300 0V6.500M15.900 0V6.500" stroke="#b89b32" stroke-width="1.300"/><text x="4.300" y="20.200" font-family="Liberation Serif, serif" font-style="italic" font-weight="700" font-size="19.500" fill="#2e86d2" textLength="20" lengthAdjust="spacingAndGlyphs">fx</text></svg>
<div class="clip" style="left:40px;top:662px;width:153px;height:20.7px"><span class="t" style='left:2.62px;top:3px;font-size:12.7px;color:#333;transform:scaleX(0.9548)'>AddNegativePaymentCustomer</span></div>
<svg style="left:42px;top:681px" width="11.52" height="11.52" viewBox="0 0 16 16"><g fill="none" stroke-linecap="round"><path d="M2.2 10.800C4.400 8.800 6 5.600 5.200 1.400C6.400 2.100 7.300 3 8 4.100C10.400 3.100 13.600 3.900 15.600 6C13 5.700 10.600 6.100 8.600 7.100C6.600 8.300 4.800 10 2.200 10.800z" fill="#d4545a" fill-opacity="0.720"/><path d="M5.300 1.300C6.200 .9 7.200 1.100 7.800 1.800" stroke="#e9a3a6" stroke-width="0.700"/><path d="M6.600 3.200c.9 1.100 1 2.300 .3 3.500M9.800 4.600c-1.100 .3 -2 1 -2.500 2.100M11.200 4.500c.8 -.3 1.700 -.100 2.300 .500M4.400 8.400c.8 -.300 1.500 -.800 2 -1.500" stroke="#fff" stroke-width="0.650" stroke-opacity="0.900"/><path d="M2.400 11.800C3.600 14.200 6.200 15.200 8.400 13.800C9.300 13.100 9.500 11.900 9 10.800" stroke="#e9e9e9" stroke-width="1"/><path d="M3.800 12.400C5 13.500 6.500 13.500 7.600 12.600" stroke="#efefef" stroke-width="0.800"/></g></svg>
<div class="clip" style="left:54px;top:680px;width:139px;height:19.5px"><span class="t" style='left:1.52px;top:3px;font-size:11.5px;color:#5b90c6;transform:scaleX(0.9687)'>Staging DW &gt; MITI-Finance-Staging-DW</span></div>
<span class="t" style='left:210.68px;top:665px;font-size:12.7px;color:#6a9c1f;transform:scaleX(0.9877)'>'Negative'</span>
<span class="t" style='left:268.15px;top:665px;font-size:12.7px;color:#333;transform:scaleX(0.9473)'>+ PaymentStatus</span>
<span class="t" style='left:414.15px;top:665px;font-size:12.7px;color:#333;transform:scaleX(0.9436);font-weight:700'>Where:</span>
<span class="t" style='left:413.70px;top:680px;font-size:12.7px;color:#333;transform:scaleX(0.9782)'>PaymentAmount &lt; 0</span>
</section>
<div class="b" style="left:611px;top:507px;width:4px;height:243px;background:#dcdcdc;"></div>
<i class="grip" style="left:612px;top:620px"></i>
<i class="grip" style="left:612px;top:627px"></i>
<i class="grip" style="left:612px;top:634px"></i>
<section id="use">
<div class="b" style="left:615px;top:507px;width:610px;height:243px;background:#fff;"></div>
<div class="b" style="left:615px;top:507px;width:610px;height:30px;background:#fafafa;"></div>
<div class="b" style="left:615px;top:537px;width:610px;height:1px;background:#e4e4e4;"></div>
<span class="t" style='left:624.43px;top:514px;font-size:15.0px;color:#2c80c4;transform:scale(0.8564,1.001);transform-origin:0 13px;font-weight:700'>Processes that use</span>
<span class="t" style='left:745.99px;top:514px;font-size:15.0px;color:#2c80c4;transform:scale(0.8761,1.001);transform-origin:0 13px;font-style:italic'>CustomerName</span>
<svg style="left:1177px;top:515px" width="14" height="14" viewBox="0 0 14 14"><path d="M5.500 0H8.500V5.200H11.300L7 9.600L2.700 5.200H5.500z" fill="#3a8ad0"/><path d="M0.800 9.500V13.200H13.200V9.500" fill="none" stroke="#3a8ad0" stroke-width="1.600"/></svg>
<svg style="left:1201px;top:517px" width="15" height="10" viewBox="0 0 15 10"><path d="M1 1.2L7.5 8l6.5-6.8" fill="none" stroke="#3a8ad0" stroke-width="1.6"/></svg>
<div class="b" style="left:615px;top:538px;width:610px;height:29px;background:#f2f2f2;"></div>
<div class="b" style="left:615px;top:567px;width:610px;height:1px;background:#d4d4d4;"></div>
<span class="t" style='left:625.04px;top:547px;font-size:11.7px;color:#444;transform:scaleX(0.9183);font-weight:700'>Process</span>
<span class="t" style='left:823.11px;top:547px;font-size:11.7px;color:#444;transform:scaleX(0.9586);font-weight:700'>Expression</span>
<span class="t" style='left:1022.27px;top:547px;font-size:11.7px;color:#444;transform:scaleX(0.9689);font-weight:700'>Conditions</span>
<div class="b" style="left:812px;top:538px;width:1px;height:212px;background:#dcdcdc;"></div>
<div class="b" style="left:1011px;top:538px;width:1px;height:212px;background:#dcdcdc;"></div>
<div class="b" style="left:1209px;top:538px;width:1px;height:30px;background:#dcdcdc;"></div>
<div class="b" style="left:1210px;top:568px;width:15px;height:182px;background:#fafafa;"></div>
<div class="b" style="left:1209px;top:568px;width:1px;height:182px;background:#ececec;"></div>
<svg style="left:626px;top:579px" width="22" height="22" viewBox="0 0 22 22"><path d="M3 11H11M11 3V19M11 3H18M11 11H18M11 18H18" stroke="#777" stroke-width="1.200" fill="none"/><rect x="8" y="0.3" width="6" height="6" rx="0.800" fill="#1c7fd2"/><rect x="9.7" y="2.0" width="2.600" height="2.600" fill="#8feaff"/><rect x="15.5" y="0.3" width="6" height="6" rx="0.800" fill="#b88a14"/><rect x="17.2" y="2.0" width="2.600" height="2.600" fill="#ffe54d"/><rect x="0.5" y="8" width="6" height="6" rx="0.800" fill="#1c7fd2"/><rect x="2.2" y="9.7" width="2.600" height="2.600" fill="#8feaff"/><rect x="8" y="8" width="6" height="6" rx="0.800" fill="#1c7fd2"/><rect x="9.7" y="9.7" width="2.600" height="2.600" fill="#8feaff"/><rect x="15.5" y="8" width="6" height="6" rx="0.800" fill="#b88a14"/><rect x="17.2" y="9.7" width="2.600" height="2.600" fill="#ffe54d"/><rect x="8" y="15.5" width="6" height="6" rx="0.800" fill="#1c7fd2"/><rect x="9.7" y="17.2" width="2.600" height="2.600" fill="#8feaff"/><rect x="15.5" y="15.5" width="6" height="6" rx="0.800" fill="#1c7fd2"/><rect x="17.2" y="17.2" width="2.600" height="2.600" fill="#8feaff"/></svg>
<span class="t" style='left:656.51px;top:575px;font-size:12.7px;color:#333;transform:scaleX(0.9625)'>CustomerPOInvoiceItem</span>
<svg style="left:656px;top:592px" width="11" height="11" viewBox="0 0 11 11"><path d="M5.400 0L10.800 5.500L5.400 11L0 5.500z" fill="#ff6a13"/><path d="M5.400 0L10.800 5.500H5.400z" fill="#ff8a2a"/><path d="M5.600 2.400C4.400 3.400 4.200 6.800 5.800 8.400L8.600 5.500z" fill="#fff"/><path d="M5 4.600H8.200V6.200H5z" fill="#1a34ff"/></svg>
<div class="clip" style="left:668px;top:590px;width:134px;height:19.5px"><span class="t" style='left:1.52px;top:3px;font-size:11.5px;color:#5b90c6;transform:scaleX(0.9799)'>Staging to OnPrem DW &gt; Staging to Dimensional</span></div>
<span class="t" style='left:819.68px;top:575px;font-size:12.7px;color:#444;transform:scaleX(0.8966);font-style:italic'>CustomerName</span>
<span class="t" style='left:1017.21px;top:575px;font-size:12.7px;color:#333;transform:scaleX(0.9177);font-weight:700'>Join:</span>
<span class="t" style='left:1018.11px;top:590px;font-size:12.7px;color:#333;transform:scaleX(0.9509)'>CustomerID=CustomerID1</span>
<span class="t" style='left:1017.21px;top:610px;font-size:12.7px;color:#333;transform:scaleX(0.9177);font-weight:700'>Join:</span>
<span class="t" style='left:1017.57px;top:625px;font-size:12.7px;color:#333;transform:scaleX(0.9821)'>InvoiceNumber=InvoiceNumber1</span>
<span class="t" style='left:1017.21px;top:645px;font-size:12.7px;color:#333;transform:scaleX(0.9177);font-weight:700'>Join:</span>
<div class="clip" style="left:1012px;top:657px;width:197px;height:20.7px"><span class="t" style='left:5.57px;top:3px;font-size:12.7px;color:#333;transform:scaleX(0.9826)'>InvoiceNumber=InvoiceNumber1 AND PaymentID=PaymentID1</span></div>
<span class="t" style='left:1017.21px;top:680px;font-size:12.7px;color:#333;transform:scaleX(0.9177);font-weight:700'>Join:</span>
<span class="t" style='left:1017.70px;top:695px;font-size:12.7px;color:#333;transform:scaleX(0.9603)'>PaymentID=PaymentID1</span>
<span class="t" style='left:1017.21px;top:715px;font-size:12.7px;color:#333;transform:scaleX(0.9177);font-weight:700'>Join:</span>
<div class="clip" style="left:1012px;top:727px;width:197px;height:20.7px"><span class="t" style='left:5.57px;top:3px;font-size:12.7px;color:#333;transform:scaleX(0.9826)'>InvoiceNumber=InvoiceNumber1 AND CustomerID=CustomerID1</span></div>
<svg style="left:1212px;top:573px" width="11" height="7" viewBox="0 0 11 7"><path d="M0.5 7L5.5 0.5L10.5 7z" fill="#8a8a8a"/></svg>
<div class="b" style="left:1213px;top:586px;width:9px;height:45px;background:#8a8a8a;border-radius:4.5px"></div>
<svg style="left:1212px;top:737px" width="11" height="7" viewBox="0 0 11 7"><path d="M0.5 0L5.5 6.5L10.5 0z" fill="#8a8a8a"/></svg>
</section>
</main>
<div class="b" style="left:0px;top:0px;width:1px;height:750px;background:#a6a6a6;"></div>
<div class="b" style="left:1265px;top:0px;width:1px;height:750px;background:#e6e6e6;"></div>
<div class="b" style="left:1266px;top:0px;width:1px;height:750px;background:#aaa;"></div>
<svg style="left:0;top:738px" width="1267" height="12" viewBox="0 0 1267 12"><path d="M0 0V12H1267V0H1266V4.500a6.500 6.500 0 0 1 -6.500 6.500H7.500a6.500 6.500 0 0 1 -6.500 -6.500V0z" fill="#666"/></svg>
</div></body></html>
